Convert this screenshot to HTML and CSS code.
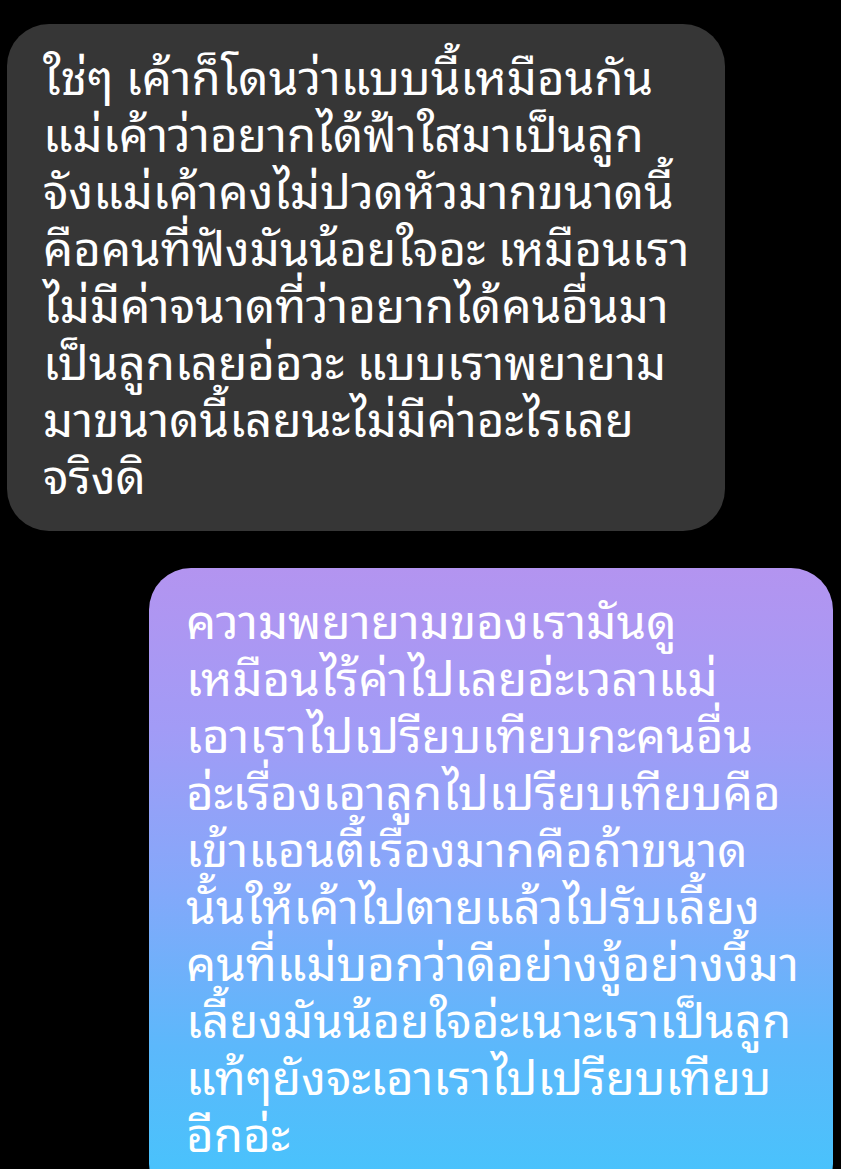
FILE: index.html
```html
<!DOCTYPE html>
<html lang="th">
  <head>
    <meta charset="utf-8">
    <link rel="stylesheet" href="styles.css">
  </head>
  <body>
    <div class="chat">
      <div class="bubble received">
        ใช่ๆ เค้าก็โดนว่าแบบนี้เหมือนกัน<br>
        แม่เค้าว่าอยากได้ฟ้าใสมาเป็นลูก<br>
        จังแม่เค้าคงไม่ปวดหัวมากขนาดนี้<br>
        คือคนที่ฟังมันน้อยใจอะ เหมือนเรา<br>
        ไม่มีค่าจนาดที่ว่าอยากได้คนอื่นมา<br>
        เป็นลูกเลยอ่อวะ แบบเราพยายาม<br>
        มาขนาดนี้เลยนะไม่มีค่าอะไรเลย<br>
        จริงดิ
      </div>
      <div class="bubble sent">
        ความพยายามของเรามันดู<br>
        เหมือนไร้ค่าไปเลยอ่ะเวลาแม่<br>
        เอาเราไปเปรียบเทียบกะคนอื่น<br>
        อ่ะเรื่องเอาลูกไปเปรียบเทียบคือ<br>
        เข้าแอนตี้เรื่องมากคือถ้าขนาด<br>
        นั้นให้เค้าไปตายแล้วไปรับเลี้ยง<br>
        คนที่แม่บอกว่าดีอย่างงู้อย่างงี้มา<br>
        เลี้ยงมันน้อยใจอ่ะเนาะเราเป็นลูก<br>
        แท้ๆยังจะเอาเราไปเปรียบเทียบ<br>
        อีกอ่ะ
      </div>
    </div>
  </body>
</html>
```

FILE: styles.css
```css
html, body {
  margin: 0;
  background: #000;
}

.chat {
  display: flex;
  flex-direction: column;
  padding: 24px 8px 0 7px;
  gap: 37px;
}

.bubble {
  color: #fff;
  font-family: "Noto Sans Thai Looped", "Noto Sans", sans-serif;
  font-size: 47.5px;
  line-height: 57px;
  border-radius: 42px;
  white-space: nowrap;
}

.received {
  align-self: flex-start;
  width: 718px;
  box-sizing: border-box;
  padding: 22px 20px 29px 36px;
  background: #363636;
}

.sent {
  align-self: flex-end;
  width: 684px;
  box-sizing: border-box;
  padding: 22px 20px 46px 37px;
  background: linear-gradient(180deg, #b394f0 0%, #a29bf6 25%, #84a8fa 50%, #5cb8fb 75%, #44c5fc 100%);
}
```
